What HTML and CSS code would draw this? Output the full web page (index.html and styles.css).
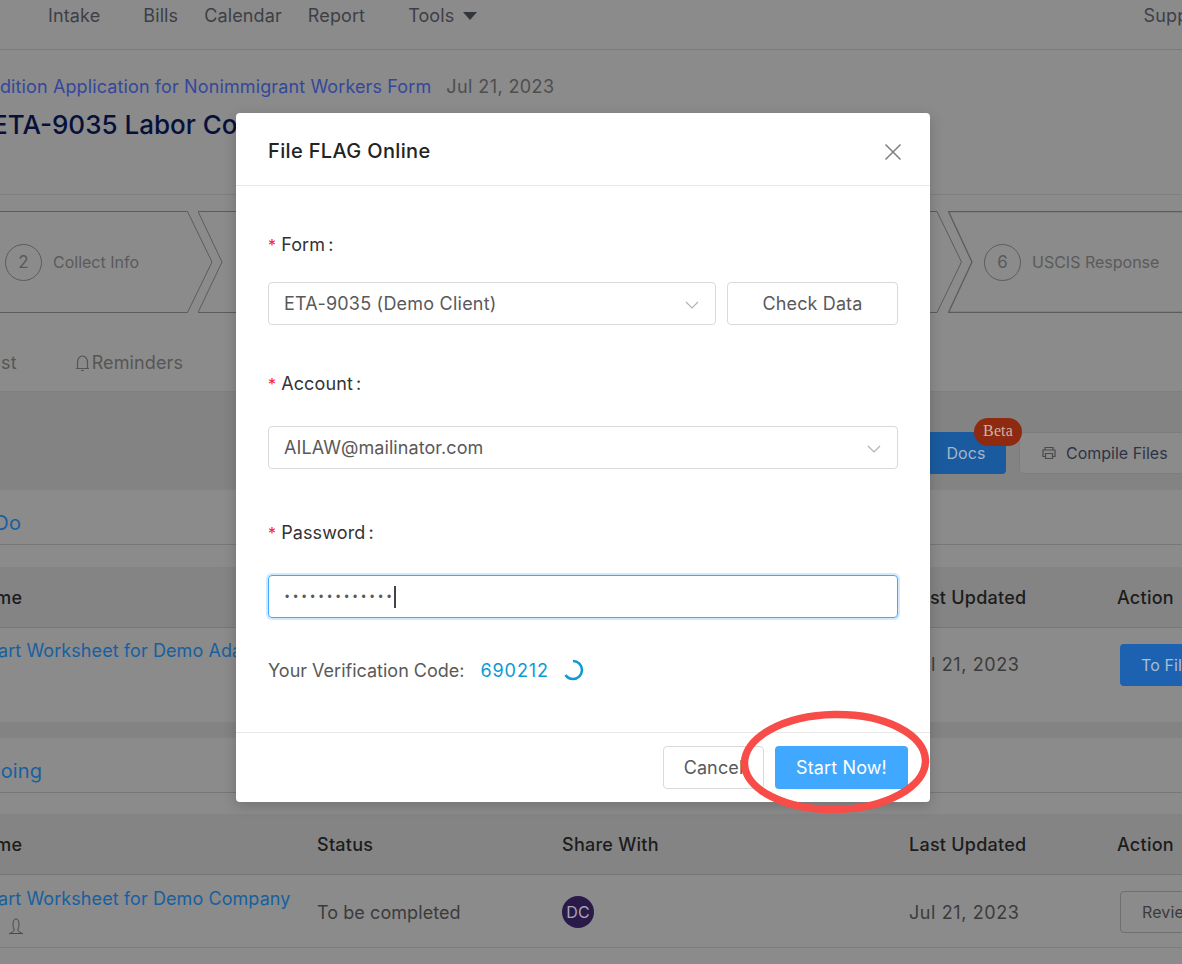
FILE: index.html
```html
<!DOCTYPE html>
<html lang="en">
<head>
<meta charset="utf-8">
<title>File FLAG Online</title>
<link rel="stylesheet" href="styles.css">
</head>
<body>
<div class="page">
  <header class="nav">
    <a class="nav-item intake">Intake</a>
    <a class="nav-item bills">Bills</a>
    <a class="nav-item calendar">Calendar</a>
    <a class="nav-item report">Report</a>
    <a class="nav-item tools">Tools <span class="caret"></span></a>
    <a class="nav-item support">Support</a>
  </header>

  <section class="head">
    <div class="crumb"><a class="crumb-link">Condition Application for Nonimmigrant Workers Form</a><span class="crumb-date">Jul 21, 2023</span></div>
    <h1 class="title">ETA-9035 Labor Condition</h1>
  </section>

  <section class="process">
    <div class="steps">
      <div class="step step-a">
        <svg class="step-shape" width="224" height="102" viewBox="0 0 224 102"><path d="M0 .5H197.500L222 51 197.500 101.500H0" /></svg>
        <span class="step-num">2</span><span class="step-name">Collect Info</span>
      </div>
      <div class="step step-b">
        <svg class="step-shape" width="765" height="102" viewBox="0 0 765 102"><path d="M0 .5H739L763.500 51 739 101.500H0L24 51Z" /></svg>
      </div>
      <div class="step step-c">
        <svg class="step-shape" width="240" height="102" viewBox="0 0 240 102"><path class="thick" d="M240 .5H.5L24 51 .5 101.500H240" /></svg>
        <span class="step-num">6</span><span class="step-name">USCIS Response</span>
      </div>
    </div>
    <nav class="tabs">
      <span class="tab tab-check">Checklist</span>
      <span class="tab tab-rem">
        <svg width="17" height="18" viewBox="0 0 17 18" class="bell"><path d="M2 14.500h13M3.500 14.500V8.500C3.500 5 5.500 2 8.500 2s5 3 5 6.500v6M7 16.500h3"/></svg>Reminders
      </span>
    </nav>
  </section>

  <section class="toolbar">
    <button class="btn-docs">Docs<span class="beta">Beta</span></button>
    <button class="btn-compile">
      <svg width="16" height="16" viewBox="0 0 16 16" class="printer"><path d="M4 5V2.500h8V5M4 11.500H2V5h12v6.500h-2M4.500 8.500h7v5h-7z"/></svg>
      Compile Files
    </button>
  </section>

  <section class="panel panel-todo">
    <h2 class="panel-title"><span class="cut-todo">To Do</span></h2>
    <div class="grid thead">
      <span class="cell-head"><span class="cut-name">Name</span></span>
      <span>Status</span><span>Share With</span>
      <span>Last Updated</span><span>Action</span>
    </div>
    <div class="grid trow trow-todo">
      <div class="cell-name"><a class="link cut-link">Chart Worksheet for Demo Adam</a></div>
      <span></span><span></span>
      <span class="date">Jul 21, 2023</span>
      <span><button class="btn-file">To File</button></span>
    </div>
  </section>

  <div class="band"></div>

  <section class="panel panel-going">
    <h2 class="panel-title"><span class="cut-going">Ongoing</span></h2>
    <div class="grid thead">
      <span class="cell-head"><span class="cut-name">Name</span></span>
      <span>Status</span><span>Share With</span>
      <span>Last Updated</span><span>Action</span>
    </div>
    <div class="grid trow">
      <div class="cell-name">
        <a class="link cut-link">Chart Worksheet for Demo Company</a>
        <svg class="user" width="16" height="16" viewBox="0 0 16 16"><path d="M1 15.500h14M3 15.500v-1c2.500-.5 3.500-1.500 3-3.500C4.500 8.500 4.500 1 8 1s3.500 7.500 2 10c-.5 2 .5 3 3 3.500v1"/></svg>
      </div>
      <span class="txt">To be completed</span>
      <span><span class="avatar">DC</span></span>
      <span class="date">Jul 21, 2023</span>
      <span><button class="btn-review">Review</button></span>
    </div>
  </section>

  <div class="modal">
    <div class="modal-head">
      <span class="modal-title">File FLAG Online</span>
      <svg class="close" width="18" height="18" viewBox="0 0 18 18"><path d="M1.500 1.500l15 15M16.500 1.500l-15 15"/></svg>
    </div>
    <div class="modal-body">
      <label class="label"><i>*</i>Form<b>:</b></label>
      <div class="row row-form">
        <div class="select sel-form">ETA-9035 (Demo Client)
          <svg class="chev" width="14" height="8" viewBox="0 0 14 8"><path d="M1 1l6 6 6-6"/></svg>
        </div>
        <button class="btn-check">Check Data</button>
      </div>
      <label class="label"><i>*</i>Account<b>:</b></label>
      <div class="row row-acct">
        <div class="select sel-acct">AILAW@mailinator.com
          <svg class="chev" width="14" height="8" viewBox="0 0 14 8"><path d="M1 1l6 6 6-6"/></svg>
        </div>
      </div>
      <label class="label"><i>*</i>Password<b>:</b></label>
      <div class="row row-pass">
        <div class="password"><span class="dots">•••••••••••••</span><span class="cursor"></span></div>
      </div>
      <div class="verify">
        <span>Your Verification Code:</span>
        <span class="code">690212</span>
        <svg class="spin" width="22" height="22" viewBox="0 0 22 22"><path d="M11 2a9 9 0 0 1 0 18A9 9 0 0 1 3.500 16"/></svg>
      </div>
    </div>
    <div class="modal-foot">
      <button class="btn-cancel">Cancel</button>
      <button class="btn-start">Start Now!</button>
    </div>
  </div>

  <svg class="mark" width="200" height="112" viewBox="0 0 200 112"><ellipse cx="100" cy="56" rx="90.500" ry="47.500" transform="rotate(-1 100 56)"/></svg>
</div>
</body>
</html>
```

FILE: styles.css
```css
* { box-sizing: border-box; }
html, body { margin: 0; padding: 0; }
body {
  font-family: Inter, "Liberation Sans", sans-serif;
  font-size: 18px;
  letter-spacing: .12px;
  background: #8b8b8b;
  color: #2b2b2b;
}
button { font-family: inherit; letter-spacing: inherit; cursor: pointer; }
.page {
  position: relative;
  width: 1182px;
  height: 964px;
  overflow: hidden;
  background: #8b8b8b;
}

/* top nav */
.nav {
  height: 50px;
  border-bottom: 1px solid #7a7a7a;
  display: flex;
  padding: 0 0 26px 48px;
  align-items: flex-end;
  color: #3d3f47;
  line-height: 14px;
  white-space: nowrap;
}
.nav-item { display: block; }
.bills { margin-left: 43px; }
.calendar { margin-left: 26px; }
.report { margin-left: 26px; }
.tools { margin-left: 43px; }
.support { margin-left: 667px; }
.caret {
  display: inline-block;
  width: 0; height: 0;
  margin-left: 3px;
  vertical-align: 2px;
  border-left: 7px solid transparent;
  border-right: 7px solid transparent;
  border-top: 8px solid #33353d;
}

/* page heading */
.head {
  height: 145px;
  padding-top: 24px;
  border-bottom: 1px solid #7f7f7f;
  white-space: nowrap;
}
.crumb { line-height: 26px; display: flex; margin-left: -35px; }
.crumb-link { color: #34479b; }
.crumb-date { color: #4e4e4e; margin-left: 15px; letter-spacing: .4px; }
.title {
  margin: 7px 0 0 -8px;
  font-size: 26px;
  line-height: 36px;
  font-weight: 500;
  letter-spacing: 0;
  color: #07103a;
}

/* process chevrons */
.process { height: 197px; padding-top: 16px; border-bottom: 1px solid #7f7f7f; }
.steps { display: flex; height: 102px; }
.step {
  position: relative;
  flex: none;
  height: 102px;
  display: flex;
  align-items: center;
  font-size: 16px;
  letter-spacing: 0;
  color: #5a5a5a;
  white-space: nowrap;
}
.step-shape { position: absolute; left: 0; top: 0; }
.step-shape path { fill: none; stroke: #5c5c5c; stroke-width: 1; }
.step-shape path.thick { stroke-width: 1.300; }
.step-a { width: 224px; margin-left: -10px; padding-left: 15px; }
.step-b { width: 765px; margin-left: -16px; }
.step-c { width: 240px; margin-left: -15px; padding-left: 36px; }
.step-num {
  width: 37px;
  height: 37px;
  border: 1px solid #5c5c5c;
  border-radius: 50%;
  display: flex;
  align-items: center;
  justify-content: center;
  margin-right: 11px;
  font-size: 17px;
  position: relative;
}
.step-name { position: relative; }

.tabs { display: flex; margin: 38px 0 0 -63px; line-height: 24px; color: #565656; white-space: nowrap; }
.tab-rem { margin-left: 57px; display: flex; align-items: center; }
.bell { fill: none; stroke: #565656; stroke-width: 1.200; margin-right: 1px; }

/* toolbar band */
.toolbar {
  height: 98px;
  background: #838383;
  padding-top: 40px;
  display: flex;
  justify-content: flex-end;
  margin-right: -60px;
  gap: 13px;
}
.btn-docs {
  position: relative;
  width: 90px;
  height: 42px;
  border: 0;
  border-radius: 0 4px 4px 0;
  background: #1a5b9f;
  color: #a3b6cb;
  font-size: 16px;
  padding: 0 0 0 10px;
}
.beta {
  position: absolute;
  right: -16px;
  top: -14px;
  width: 48px;
  height: 28px;
  border-radius: 14px;
  background: #8e2a10;
  color: #c9b3ab;
  font-family: "Liberation Serif", serif;
  font-size: 16px;
  line-height: 26px;
  text-align: center;
}
.btn-compile {
  width: 223px;
  height: 42px;
  border: 1px solid #7d7d7d;
  border-radius: 4px;
  background: #8b8b8b;
  color: #2f3344;
  font-size: 16px;
  letter-spacing: 0;
  text-align: left;
  padding: 0 0 0 21px;
  display: flex;
  align-items: center;
  gap: 9px;
}
.printer { fill: none; stroke: #4a4a4a; stroke-width: 1.200; }

/* panels */
.panel-todo { height: 232px; }
.panel-going { height: 226px; }
.panel-title {
  margin: 0 0 22px;
  height: 55px;
  border-bottom: 1px solid #777;
  font-size: 20px;
  font-weight: 400;
  line-height: 26px;
  padding-top: 20px;
  color: #17609f;
  white-space: nowrap;
}
.panel-going .panel-title { margin-bottom: 21px; }
.cut-todo { display: block; margin-left: -35px; }
.cut-going { display: block; margin-left: -39px; }
.band { height: 16px; background: #838383; }

.grid {
  display: grid;
  grid-template-columns: 317px 245px 347px 208px 65px;
  align-items: center;
}
.thead {
  height: 61px;
  background: #848484;
  border-bottom: 1px solid #777;
  font-weight: 500;
  letter-spacing: .25px;
  color: #1c1c1c;
  white-space: nowrap;
}
.panel-going .thead { padding-top: 1px; }
.cut-name { display: block; margin-left: -29px; }
.trow {
  height: 73px;
  border-bottom: 1px solid #7d7d7d;
  color: #3b3b3b;
  white-space: nowrap;
}
.panel-going .trow { padding-top: 2px; }
.trow-todo { border-bottom: 0; }
.cell-name { align-self: stretch; position: relative; padding-top: 10px; }
.panel-going .cell-name { padding-top: 9px; }
.link { display: block; color: #17609f; line-height: 26px; letter-spacing: .08px; }
.cut-link { margin-left: -26px; }
.txt { letter-spacing: .07px; }
.date { letter-spacing: .6px; }
.user { display: block; margin: 6px 0 0 8px; fill: none; stroke: #4a4a4a; stroke-width: 1; }
.avatar {
  display: flex;
  width: 32px; height: 32px;
  border-radius: 50%;
  background: #2a1a4a;
  color: #a9a5b4;
  font-size: 16px;
  align-items: center;
  justify-content: center;
}
.btn-file, .btn-review {
  margin-left: 3px;
  width: 90px;
  height: 42px;
  border-radius: 4px;
  font-size: 16px;
  text-align: left;
  padding: 0 0 0 21px;
}
.btn-file { border: 0; background: #1c62b0; color: #a9bdd3; }
.btn-review { border: 1px solid #6f6f6f; background: #8b8b8b; color: #3b3b3b; }

/* modal */
.modal {
  position: absolute;
  left: 236px;
  top: 113px;
  width: 694px;
  height: 689px;
  background: #fff;
  border-radius: 4px;
  box-shadow: 0 4px 14px rgba(0,0,0,.18);
  display: flex;
  flex-direction: column;
}
.modal-head {
  height: 73px;
  border-bottom: 1px solid #e8e8e8;
  padding: 0 28px 0 32px;
  display: flex;
  align-items: center;
  justify-content: space-between;
}
.modal-title { font-size: 20px; font-weight: 500; letter-spacing: .35px; color: #232323; position: relative; top: 2px; }
.close { fill: none; stroke: #7f7f7f; stroke-width: 1.500; position: relative; top: 3px; }
.modal-body { flex: 1; padding: 45px 32px 0; }
.label { display: block; height: 28px; line-height: 28px; color: #333; white-space: nowrap; }
.label i { color: #f5222d; font-style: normal; margin-right: 5px; font-size: 16px; }
.label b { font-weight: 400; margin-left: 3px; }
.row { display: flex; gap: 11px; }
.row-form { margin: 23px 0 45px; }
.row-acct { margin: 28px 0 50px; }
.row-pass { margin: 28px 0 41px; }
.select {
  position: relative;
  height: 43px;
  border: 1px solid #d9d9d9;
  border-radius: 4px;
  color: #595959;
  line-height: 41px;
  padding-left: 15px;
  white-space: nowrap;
}
.sel-form { width: 448px; letter-spacing: .22px; }
.sel-acct { width: 630px; letter-spacing: .08px; }
.chev { position: absolute; right: 16px; top: 18px; fill: none; stroke: #b3b3b3; stroke-width: 1.200; }
.btn-check {
  width: 171px;
  height: 43px;
  border: 1px solid #d9d9d9;
  border-radius: 4px;
  background: #fff;
  color: #595959;
  font-size: 18px;
}
.password {
  width: 630px;
  height: 43px;
  border: 1px solid #40a9ff;
  border-radius: 4px;
  box-shadow: 0 0 0 2px rgba(24,144,255,.2);
  display: flex;
  align-items: center;
  padding-left: 16px;
  color: #595959;
}
.dots { font-size: 12px; letter-spacing: 4.300px; font-family: "Liberation Sans", sans-serif; }
.cursor { width: 2px; height: 22px; background: #444; margin-left: -2px; }
.verify {
  display: flex;
  align-items: center;
  height: 22px;
  color: #595959;
  letter-spacing: 0;
  white-space: nowrap;
}
.code { color: #0b9ad1; margin-left: 16px; letter-spacing: .9px; }
.spin { margin-left: 13px; fill: none; stroke: #0b9ad1; stroke-width: 2.500; }
.modal-foot {
  height: 70px;
  border-top: 1px solid #e8e8e8;
  display: flex;
  justify-content: flex-end;
  gap: 11px;
  padding: 13px 22px 0 0;
}
.btn-cancel, .btn-start {
  height: 43px;
  border-radius: 4px;
  font-size: 18px;
}
.btn-cancel { width: 101px; border: 1px solid #d9d9d9; background: #fff; color: #595959; }
.btn-start { width: 133px; border: 0; background: #40a9ff; color: #fff; }
.mark {
  position: absolute;
  left: 735px;
  top: 706px;
  fill: none;
  stroke: #f84c48;
  stroke-width: 7.500;
}
```
